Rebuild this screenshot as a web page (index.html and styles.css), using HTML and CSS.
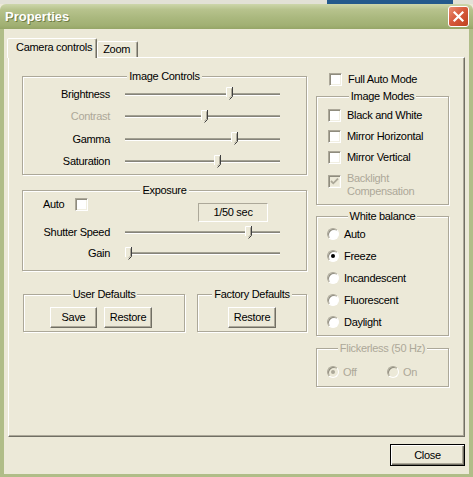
FILE: index.html
```html
<!DOCTYPE html>
<html>
<head>
<meta charset="utf-8">
<title>Properties</title>
<link rel="stylesheet" href="styles.css">
</head>
<body>
<div class="window">
  <div class="desk"><span class="desk-win"></span></div>
  <div class="titlebar">
    <span class="title">Properties</span>
    <span class="close-x"><svg width="13" height="13" viewBox="0 0 13 13"><path d="M2.5 2.5L10.5 10.5M10.5 2.5L2.5 10.5" stroke="#fff" stroke-width="2.2" stroke-linecap="square"/></svg></span>
  </div>
  <div class="client">
    <div class="tabs">
      <div class="tab active">Camera controls</div>
      <div class="tab">Zoom</div>
    </div>
    <div class="panel">
      <div class="col-left">
        <fieldset class="group g-image">
          <legend>Image Controls</legend>
          <div class="rows">
            <div class="srow"><span class="lbl">Brightness</span><div class="slider"><div class="track"></div><svg class="thumb" width="7" height="13" viewBox="0 0 7 13" style="left:101px"><path d="M0.5 0.5H6.5V9.5L3.5 12.5L0.5 9.5Z" fill="#ECE9D8"/><path d="M0.5 10V0.5H6" fill="none" stroke="#fff"/><path d="M6.5 0V9.5L3.5 12.5" fill="none" stroke="#404040"/><path d="M5.5 1.5V9L3.5 11" fill="none" stroke="#ACA899"/></svg></div></div>
            <div class="srow"><span class="lbl dis">Contrast</span><div class="slider"><div class="track"></div><svg class="thumb" width="7" height="13" viewBox="0 0 7 13" style="left:76px"><path d="M0.5 0.5H6.5V9.5L3.5 12.5L0.5 9.5Z" fill="#ECE9D8"/><path d="M0.5 10V0.5H6" fill="none" stroke="#fff"/><path d="M6.5 0V9.5L3.5 12.5" fill="none" stroke="#404040"/><path d="M5.5 1.5V9L3.5 11" fill="none" stroke="#ACA899"/></svg></div></div>
            <div class="srow"><span class="lbl">Gamma</span><div class="slider"><div class="track"></div><svg class="thumb" width="7" height="13" viewBox="0 0 7 13" style="left:106px"><path d="M0.5 0.5H6.5V9.5L3.5 12.5L0.5 9.5Z" fill="#ECE9D8"/><path d="M0.5 10V0.5H6" fill="none" stroke="#fff"/><path d="M6.5 0V9.5L3.5 12.5" fill="none" stroke="#404040"/><path d="M5.5 1.5V9L3.5 11" fill="none" stroke="#ACA899"/></svg></div></div>
            <div class="srow"><span class="lbl">Saturation</span><div class="slider"><div class="track"></div><svg class="thumb" width="7" height="13" viewBox="0 0 7 13" style="left:89px"><path d="M0.5 0.5H6.5V9.5L3.5 12.5L0.5 9.5Z" fill="#ECE9D8"/><path d="M0.5 10V0.5H6" fill="none" stroke="#fff"/><path d="M6.5 0V9.5L3.5 12.5" fill="none" stroke="#404040"/><path d="M5.5 1.5V9L3.5 11" fill="none" stroke="#ACA899"/></svg></div></div>
          </div>
        </fieldset>

        <fieldset class="group g-exposure">
          <legend>Exposure</legend>
          <div class="rows">
            <div class="exp-top">
              <div class="auto"><span>Auto</span><span class="cb"></span></div>
              <div class="readout">1/50 sec</div>
            </div>
            <div class="srow"><span class="lbl">Shutter Speed</span><div class="slider"><div class="track"></div><svg class="thumb" width="7" height="13" viewBox="0 0 7 13" style="left:120px"><path d="M0.5 0.5H6.5V9.5L3.5 12.5L0.5 9.5Z" fill="#ECE9D8"/><path d="M0.5 10V0.5H6" fill="none" stroke="#fff"/><path d="M6.5 0V9.5L3.5 12.5" fill="none" stroke="#404040"/><path d="M5.5 1.5V9L3.5 11" fill="none" stroke="#ACA899"/></svg></div></div>
            <div class="srow"><span class="lbl">Gain</span><div class="slider"><div class="track"></div><svg class="thumb" width="7" height="13" viewBox="0 0 7 13" style="left:0px"><path d="M0.5 0.5H6.5V9.5L3.5 12.5L0.5 9.5Z" fill="#ECE9D8"/><path d="M0.5 10V0.5H6" fill="none" stroke="#fff"/><path d="M6.5 0V9.5L3.5 12.5" fill="none" stroke="#404040"/><path d="M5.5 1.5V9L3.5 11" fill="none" stroke="#ACA899"/></svg></div></div>
          </div>
        </fieldset>

        <div class="defaults">
          <fieldset class="group g-user">
            <legend>User Defaults</legend>
            <div class="btns"><button class="btn btn-save">Save</button><button class="btn btn-restore">Restore</button></div>
          </fieldset>
          <fieldset class="group g-factory">
            <legend>Factory Defaults</legend>
            <div class="btns"><button class="btn btn-restore">Restore</button></div>
          </fieldset>
        </div>
      </div>

      <div class="col-right">
        <div class="full-auto"><span class="cb"></span><span>Full Auto Mode</span></div>

        <fieldset class="group g-modes">
          <legend>Image Modes</legend>
          <div class="list">
            <div class="cbrow"><span class="cb"></span><span>Black and White</span></div>
            <div class="cbrow"><span class="cb"></span><span>Mirror Horizontal</span></div>
            <div class="cbrow"><span class="cb"></span><span>Mirror Vertical</span></div>
            <div class="cbrow multi"><span class="cb disabled"><svg width="11" height="11" viewBox="0 0 11 11"><path d="M2 5L4.3 7.3L9 2.6" fill="none" stroke="#ACA899" stroke-width="1.8"/></svg></span><span class="dis">Backlight<br>Compensation</span></div>
          </div>
        </fieldset>

        <fieldset class="group g-wb">
          <legend>White balance</legend>
          <div class="list">
            <div class="rrow"><span class="radio"></span><span>Auto</span></div>
            <div class="rrow"><span class="radio on"></span><span>Freeze</span></div>
            <div class="rrow"><span class="radio"></span><span>Incandescent</span></div>
            <div class="rrow"><span class="radio"></span><span>Fluorescent</span></div>
            <div class="rrow"><span class="radio"></span><span>Daylight</span></div>
          </div>
        </fieldset>

        <fieldset class="group g-flick">
          <legend class="dis">Flickerless (50 Hz)</legend>
          <div class="list">
            <div class="ritem"><span class="radio disabled on"></span><span class="dis">Off</span></div>
            <div class="ritem"><span class="radio disabled"></span><span class="dis">On</span></div>
          </div>
        </fieldset>
      </div>
    </div>
    <div class="footer"><button class="btn btn-close">Close</button></div>
  </div>
</div>
</body>
</html>
```

FILE: styles.css
```css
* { box-sizing: border-box; }

html, body {
  margin: 0;
  padding: 0;
}

body {
  width: 473px;
  height: 477px;
  overflow: hidden;
  background: #ECE9D8;
  font-family: "Liberation Sans", Arial, sans-serif;
  font-size: 11px;
  line-height: 13px;
  letter-spacing: -0.3px;
  color: #000;
}

.window {
  width: 473px;
  height: 477px;
  display: flex;
  flex-direction: column;
}

/* strip of the desktop behind the window */
.desk {
  height: 4px;
  display: flex;
  padding-left: 327px;
  background: #e2e1d6;
}
.desk-win {
  width: 126px;
  background: #245a8c;
}

/* title bar */
.titlebar {
  height: 25px;
  display: flex;
  align-items: center;
  justify-content: space-between;
  padding: 0 4px 0 5px;
  border-radius: 6px 6px 0 0;
  background: linear-gradient(#cdd6ab 0%, #b7c38d 22%, #aab87e 55%, #a1b073 85%, #95a567 100%);
}
.title {
  font-weight: bold;
  font-size: 13px;
  letter-spacing: 0;
  color: #fff;
  text-shadow: 1px 1px 0 #6f7d45;
}
.close-x {
  width: 21px;
  height: 21px;
  border: 1px solid #fff;
  border-radius: 3px;
  background: linear-gradient(135deg, #eb9074 0%, #d75b3e 45%, #c0401f 100%);
  display: flex;
  align-items: center;
  justify-content: center;
}

/* client area */
.client {
  flex: 1;
  display: flex;
  flex-direction: column;
  padding: 0 4px;
  border-style: solid;
  border-color: #b0bd88;
  border-width: 0 4px 3px 4px;
}

/* tabs */
.tabs {
  height: 29px;
  display: flex;
  align-items: flex-end;
  margin: 0 0 -1px -1px;
  position: relative;
  z-index: 1;
}
.tab {
  height: 16px;
  margin-bottom: 1px;
  display: flex;
  align-items: center;
  padding: 0 7px 0 5px;
  border: 1px solid;
  border-bottom: 0;
  border-color: #fff #716F64 transparent #fff;
  border-radius: 2px 2px 0 0;
  box-shadow: inset -1px 0 0 #ACA899;
  background: #ECE9D8;
}
.tab.active {
  height: 20px;
  margin-bottom: 0;
  padding: 0 4px 2px 8px;
}

/* tab page */
.panel {
  height: 380px;
  display: flex;
  gap: 9px;
  padding: 12px 15px 0 13px;
  border: 1px solid;
  border-color: #fff #716F64 #716F64 #fff;
  box-shadow: inset -1px -1px 0 #ACA899;
}
.col-left {
  width: 285px;
  display: flex;
  flex-direction: column;
}
.col-right {
  width: 133px;
  display: flex;
  flex-direction: column;
}

/* group boxes */
.group {
  margin: 0;
  padding: 0;
  min-width: 0;
  border: 1px solid #ACA899;
  box-shadow: inset 1px 1px 0 #fff, 1px 1px 0 #fff;
}
.group legend {
  margin: 0 auto;
  padding: 0 2px;
  line-height: 13px;
  background: #ECE9D8;
}

.rows {
  display: flex;
  flex-direction: column;
}
.g-image .rows { padding-bottom: 1px; }
.g-image .srow { height: 22.5px; }

.srow {
  display: grid;
  grid-template-columns: 87px 155px;
  column-gap: 15px;
  align-items: center;
  height: 21px;
}
.lbl { text-align: right; }

.slider {
  position: relative;
  height: 14px;
  display: flex;
  align-items: center;
}
.track {
  flex: 1;
  height: 3px;
  border-top: 1px solid #a3a192;
  border-bottom: 1px solid #fff;
  background: #85837a;
}
.thumb {
  position: absolute;
  top: 0;
  display: block;
}

/* exposure */
.g-exposure { margin-top: 9px; }
.g-exposure .rows { padding-bottom: 6px; }
.exp-top {
  display: grid;
  grid-template-columns: 87px 155px;
  column-gap: 15px;
  height: 25px;
}
.auto {
  display: flex;
  align-items: center;
  gap: 11px;
  height: 13px;
  margin-top: 1px;
  padding-left: 20px;
}
.readout {
  margin: 6px 0 0 73px;
  width: 70px;
  height: 19px;
  border: 1px solid;
  border-color: #ACA899 #fff #fff #ACA899;
  display: flex;
  align-items: center;
  justify-content: center;
}

/* defaults */
.defaults {
  display: flex;
  gap: 12px;
  margin-top: 17px;
}
.g-user { width: 162px; margin-left: 1px; }
.g-factory { width: 110px; }
.btns {
  display: flex;
  gap: 7px;
  padding: 6px 0 3px;
}
.g-user .btns { padding-left: 26px; }
.g-factory .btns { justify-content: center; }

.btn {
  height: 21px;
  padding: 0;
  font: inherit;
  letter-spacing: inherit;
  color: #000;
  background: #ECE9D8;
  border: 1px solid;
  border-color: #fff #716F64 #716F64 #fff;
  box-shadow: inset -1px -1px 0 #ACA899;
}
.btn-save { width: 47px; }
.btn-restore { width: 48px; }
.btn-close {
  width: 75px;
  height: 22px;
  border: 1px solid #000;
  box-shadow: inset 1px 1px 0 #fff, inset -1px -1px 0 #716F64, inset -2px -2px 0 #ACA899;
}

/* checkboxes and radios */
.cb {
  width: 13px;
  height: 13px;
  flex: none;
  display: flex;
  align-items: center;
  justify-content: center;
  background: #fff;
  border: 1px solid;
  border-color: #ACA899 #fff #fff #ACA899;
  box-shadow: inset 1px 1px 0 #8f8c7e, inset -1px -1px 0 #F1EFE2;
}
.cb.disabled { background: #ECE9D8; }

.radio {
  width: 12px;
  height: 12px;
  flex: none;
  position: relative;
  border-radius: 50%;
  background: #fff;
  border: 1px solid;
  border-color: #ACA899 #fff #fff #ACA899;
  box-shadow: inset 1px 1px 0 #8f8c7e;
}
.radio.on::after {
  content: "";
  position: absolute;
  left: 3px;
  top: 3px;
  width: 4px;
  height: 4px;
  border-radius: 50%;
  background: #000;
}
.radio.disabled { background: #ECE9D8; }
.radio.disabled.on::after { background: #ACA899; }

.dis { color: #ACA899; }

/* right column */
.full-auto {
  height: 19px;
  display: flex;
  align-items: center;
  gap: 6px;
  padding-left: 13px;
}
.g-modes { margin-top: 1px; }
.g-modes .list { padding: 2px 0 6px; }
.cbrow {
  height: 21px;
  display: flex;
  align-items: center;
  gap: 6px;
  padding-left: 11px;
}
.cbrow.multi {
  height: auto;
  align-items: flex-start;
  padding-top: 4px;
}
.cbrow.multi .cb { margin-top: 3px; }

.g-wb { margin-top: 5px; }
.g-wb .list { padding-bottom: 2px; }
.rrow {
  height: 22px;
  display: flex;
  align-items: center;
  gap: 5px;
  padding-left: 10px;
}

.g-flick { margin-top: 6px; }
.g-flick .list {
  display: flex;
  padding: 6px 0 3px 10px;
}
.ritem {
  width: 60px;
  height: 22px;
  display: flex;
  align-items: center;
  gap: 4px;
}

/* footer */
.footer {
  display: flex;
  justify-content: flex-end;
  margin-top: 7px;
}
```
